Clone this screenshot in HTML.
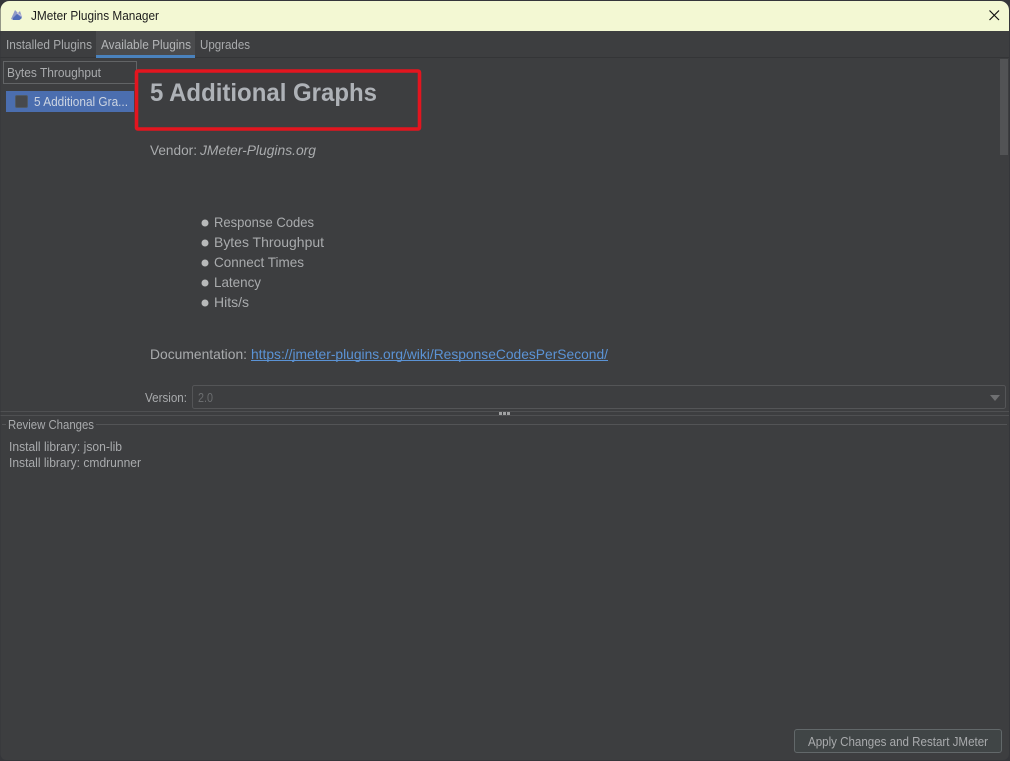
<!DOCTYPE html>
<html><head><meta charset="utf-8"><title>JMeter Plugins Manager</title>
<style>
html,body{margin:0;padding:0;width:1010px;height:761px;overflow:hidden;background:#2b2b2b}
svg{display:block}
text{font-family:"Liberation Sans",sans-serif;font-size:13px;fill:#a9abad}
</style></head><body>
<svg width="1010" height="761" viewBox="0 0 1010 761" xmlns="http://www.w3.org/2000/svg">
<defs><clipPath id="w"><path d="M0.500 10a9 9 0 0 1 9-9H1000a9 9 0 0 1 9 9V754a6 6 0 0 1-6 6H6a6 6 0 0 1-5.500-6Z"/></clipPath></defs>
<rect width="1010" height="761" fill="#35363a"/>
<g clip-path="url(#w)">
<rect width="1010" height="761" fill="#3d3e40"/>
<rect width="1010" height="31" fill="#f3f8d3"/>
<!-- title icon -->
<path d="M11 19L15 10L18 13L20 11L22 17L20 20H13Z" fill="#8f9bc8"/>
<path d="M13 18L17 14L22 18L19 20H13Z" fill="#4f6cb8"/>
<path d="M17 13L22 16" stroke="#d0c8dc" stroke-width="1"/>
<text x="31" y="20" textLength="128" lengthAdjust="spacingAndGlyphs" style="fill:#1c1c1c;font-size:13px">JMeter Plugins Manager</text>
<path d="M989.500 10.500L999 20M999 10.500L989.500 20" stroke="#111" stroke-width="1.200" fill="none"/>
<!-- tabs -->
<rect x="96" y="31" width="99" height="24" fill="#4a4b4d"/>
<rect x="96" y="55" width="99" height="3" fill="#4a82bd"/>
<rect x="0" y="57" width="96" height="1" fill="#343537"/>
<rect x="195" y="57" width="815" height="1" fill="#343537"/>
<text x="6" y="49" textLength="86" lengthAdjust="spacingAndGlyphs">Installed Plugins</text>
<text x="101" y="49" textLength="90" lengthAdjust="spacingAndGlyphs" style="fill:#b4b6b8">Available Plugins</text>
<text x="200" y="49" textLength="50" lengthAdjust="spacingAndGlyphs">Upgrades</text>
<!-- filter -->
<rect x="3.500" y="61.500" width="133" height="22" fill="#3d3e40" stroke="#626466"/>
<text x="7" y="77" textLength="94" lengthAdjust="spacingAndGlyphs">Bytes Throughput</text>
<!-- list -->
<rect x="6" y="91" width="128" height="21" fill="#4b6eaf"/>
<rect x="15.500" y="95.500" width="12" height="12" rx="1.500" fill="#47494c" stroke="#505a66"/>
<text x="34" y="106" textLength="94" lengthAdjust="spacingAndGlyphs" style="fill:#cdd5e2">5 Additional Gra...</text>
<!-- heading -->
<text x="150" y="101" textLength="227" lengthAdjust="spacingAndGlyphs" style="font-size:25px;font-weight:bold;fill:#aeb2b7">5 Additional Graphs</text>
<rect x="136.500" y="71" width="283" height="58" rx="1.500" fill="none" stroke="#e3151f" stroke-width="3.600"/>
<!-- vendor -->
<text x="150" y="155" textLength="47" lengthAdjust="spacingAndGlyphs" style="font-size:14px">Vendor:</text>
<text x="200" y="155" textLength="116" lengthAdjust="spacingAndGlyphs" style="font-size:14px;font-style:italic">JMeter-Plugins.org</text>
<!-- bullets -->
<g fill="#b8b9ba">
<circle cx="205" cy="223" r="3.500"/><circle cx="205" cy="243" r="3.500"/><circle cx="205" cy="263" r="3.500"/><circle cx="205" cy="283" r="3.500"/><circle cx="205" cy="303" r="3.500"/>
</g>
<text x="214" y="227" textLength="100" lengthAdjust="spacingAndGlyphs" style="font-size:14px">Response Codes</text>
<text x="214" y="247" textLength="110" lengthAdjust="spacingAndGlyphs" style="font-size:14px">Bytes Throughput</text>
<text x="214" y="267" textLength="90" lengthAdjust="spacingAndGlyphs" style="font-size:14px">Connect Times</text>
<text x="214" y="287" textLength="47" lengthAdjust="spacingAndGlyphs" style="font-size:14px">Latency</text>
<text x="214" y="307" textLength="35" lengthAdjust="spacingAndGlyphs" style="font-size:14px">Hits/s</text>
<!-- docs -->
<text x="150" y="359" textLength="97" lengthAdjust="spacingAndGlyphs" style="font-size:14px">Documentation:</text>
<text x="251" y="359" textLength="357" lengthAdjust="spacingAndGlyphs" style="font-size:14px;fill:#5b93d5">https://jmeter-plugins.org/wiki/ResponseCodesPerSecond/</text>
<rect x="251" y="360" width="357" height="1" fill="#5b93d5"/>
<!-- scrollbar -->
<rect x="1000" y="59" width="8" height="96" fill="#525355"/>
<!-- version -->
<text x="145" y="402" textLength="42" lengthAdjust="spacingAndGlyphs" style="font-size:12.500px">Version:</text>
<rect x="192.500" y="385.500" width="813" height="23" rx="2" fill="#3d3e40" stroke="#545557"/>
<text x="198" y="402" textLength="15" lengthAdjust="spacingAndGlyphs" style="fill:#6b6d6f;font-size:12.500px">2.0</text>
<path d="M990 395H1000L995 401Z" fill="#6f7072"/>
<!-- splitter -->
<rect x="0" y="411" width="1010" height="1" fill="#4f5052"/>
<rect x="0" y="415" width="1010" height="1" fill="#4f5052"/>
<g fill="#a0a1a2"><rect x="499" y="412" width="3" height="3"/><rect x="503" y="412" width="3" height="3"/><rect x="507" y="412" width="3" height="3"/></g>
<!-- review -->
<rect x="2" y="424" width="4" height="1" fill="#535456"/>
<rect x="96" y="424" width="911" height="1" fill="#535456"/>
<text x="8" y="429" textLength="86" lengthAdjust="spacingAndGlyphs">Review Changes</text>
<text x="9" y="451" textLength="113" lengthAdjust="spacingAndGlyphs" style="font-size:12.500px">Install library: json-lib</text>
<text x="9" y="467" textLength="132" lengthAdjust="spacingAndGlyphs" style="font-size:12.500px">Install library: cmdrunner</text>
<!-- button -->
<rect x="794.500" y="729.500" width="207" height="23" rx="2.500" fill="#404546" stroke="#62686a"/>
<text x="808" y="746" textLength="180" lengthAdjust="spacingAndGlyphs">Apply Changes and Restart JMeter</text>
</g>
</svg>
</body></html>
